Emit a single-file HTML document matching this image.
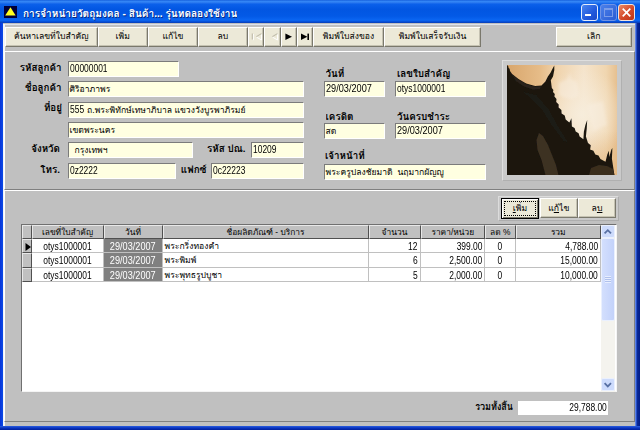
<!DOCTYPE html>
<html lang="th">
<head>
<meta charset="utf-8">
<title>การจำหน่ายวัตถุมงคล</title>
<style>
html,body{margin:0;padding:0;}
body{width:640px;height:430px;position:relative;overflow:hidden;background:#c0c0c0;
 font-family:"Liberation Sans","Tahoma","Loma","Noto Sans Thai UI","Noto Sans Thai",sans-serif;font-size:9.8px;color:#000;}
.a{position:absolute;box-sizing:border-box;white-space:nowrap;overflow:hidden;}
.v{overflow:visible;}
#title{left:0;top:0;width:640px;height:23px;
 background:linear-gradient(to bottom,#1660dc 0%,#3486f6 6%,#2b7af0 11%,#0b60ea 18%,#0256e2 40%,#0359e6 70%,#0b66f2 88%,#0650d8 94%,#0a3cb4 100%);}
#ttext{left:23px;top:3.5px;height:20px;line-height:19px;color:#fff;font-weight:bold;font-size:10.1px;text-shadow:1px 1px 0 #0a2a80;}
.btn{background:#ece9d8;border:1px solid;border-color:#fff #7a786c #7a786c #fff;box-shadow:inset -1px -1px 0 #c5c2b2;text-align:center;font-size:8.6px;line-height:17px;height:20px;top:26.5px;}
.lbl{font-weight:bold;font-size:9.8px;height:16px;line-height:16px;margin-top:-1px;}
.r{text-align:right;}
.c{text-align:center;}
.fld{background:#ffffe1;border:1px solid;border-color:#7b7b7b #fff #fff #7b7b7b;height:16px;line-height:14px;padding-left:1px;font-size:8.6px;}
.n{display:inline-block;font-size:10.3px;transform:scaleX(.82);transform-origin:0 50%;position:relative;top:0px;}
.d{transform:scaleX(.89);}
.r .n{transform-origin:100% 50%;}
.c .n,.gd .n{transform-origin:50% 50%;}
.panel{border:1px solid;border-color:#fff #808080 #808080 #fff;}
.gh{background:#c0c0c0;border:1px solid;border-color:#e8e8e8 #505050 #505050 #e8e8e8;line-height:12px;font-size:8.4px;text-align:center;}
.gc{line-height:14px;border-right:1px solid #c0c0c0;border-bottom:1px solid #c0c0c0;font-size:8.6px;padding:0 2px;background:#fff;}
.gd{background:#808080;color:#fff;text-align:center;}
</style>
</head>
<body>
<div class="a" id="title"></div>
<svg class="a" style="left:4px;top:6px" width="13" height="12" viewBox="0 0 13 12"><rect width="13" height="12" fill="#00003a"/><polygon points="6.5,1.2 11.6,9.6 1.2,9.6" fill="#ffff20"/></svg>
<div class="a" id="ttext"><span id="T1">การจำหน่ายวัตถุมงคล - สินค้า... รุ่นทดลองใช้งาน</span></div>
<div class="a" style="left:0;top:23px;width:2.5px;height:407px;background:linear-gradient(to right,#0833d8,#0a4be6);"></div>
<div class="a" style="left:3px;top:23.5px;width:632px;height:1px;background:#dde2ec;"></div>
<div class="a" style="left:2.5px;top:24px;width:2px;height:402px;background:#f2f4f8;"></div>
<div class="a" style="left:635px;top:23px;width:5px;height:407px;background:linear-gradient(to right,#7a9cf0 0,#2a55d0 28%,#0a2a96 40%,#001b8a 100%);"></div>
<div class="a" style="left:0;top:425.5px;width:640px;height:4.5px;background:linear-gradient(to bottom,#2a5ee0,#0a34c0 50%,#001f9a);"></div>
<div class="a" style="left:581px;top:4px;width:17px;height:17px;border:1px solid #e4ecfc;border-radius:3px;background:linear-gradient(135deg,#4a86f0,#2058dc 60%,#1a48c8);"></div>
<div class="a" style="left:585px;top:14.2px;width:6px;height:2.3px;background:#fff;"></div>
<div class="a" style="left:600px;top:4px;width:17px;height:17px;border:1px solid #6f93e6;border-radius:3px;background:linear-gradient(135deg,#4a80ea,#2a5cd4);"></div>
<div class="a" style="left:604px;top:8px;width:9px;height:9px;border:1px solid #7a9ce8;border-top:2px solid #7a9ce8;"></div>
<div class="a" style="left:618px;top:4px;width:17px;height:17px;border:1px solid #f4e4dc;border-radius:3px;background:linear-gradient(135deg,#ea8a66,#d4492a 55%,#bc3418);"></div>
<svg class="a" style="left:618px;top:4px" width="17" height="17" viewBox="0 0 17 17"><path d="M4.7 4.7 L12.3 12.3 M12.3 4.7 L4.7 12.3" stroke="#fff" stroke-width="1.7"/></svg>
<div class="a btn" style="left:5px;width:92.5px;"><span id="T2">ค้นหาเลขที่ใบสำคัญ</span></div>
<div class="a btn" style="left:97.5px;width:50.5px;"><span id="T3">เพิ่ม</span></div>
<div class="a btn" style="left:148px;width:50px;"><span id="T4">แก้ไข</span></div>
<div class="a btn" style="left:198px;width:49.5px;"><span id="T5">ลบ</span></div>
<div class="a btn" style="left:247.5px;width:16.5px;"><span></span></div>
<div class="a btn" style="left:264px;width:16.5px;"><span></span></div>
<div class="a btn" style="left:280.5px;width:16.5px;"><span></span></div>
<div class="a btn" style="left:297px;width:16px;"><span></span></div>
<div class="a btn" style="left:313px;width:71px;"><span id="T6">พิมพ์ใบส่งของ</span></div>
<div class="a btn" style="left:384px;width:97px;"><span id="T7">พิมพ์ใบเสร็จรับเงิน</span></div>
<div class="a btn" style="left:555.5px;width:76.5px;"><span id="T8">เลิก</span></div>
<svg class="a" style="left:247px;top:26px" width="66" height="21" viewBox="0 0 66 21"><g stroke="#fff" stroke-width="1" fill="none"><path d="M6.3 8 V14.2"/><path d="M9.6 11.2 L14.6 14 V8.2"/><path d="M25.6 11.2 L30.6 14 V8.2"/></g><g stroke="#bdb9a8" stroke-width="1.1" fill="none"><path d="M5.3 7.4 V13.4"/><path d="M9.4 10.6 L14.4 7.6"/><path d="M25.4 10.6 L30.4 7.6"/></g><g fill="#000"><polygon points="38.4,7.6 38.4,14 45,10.8"/><polygon points="54,7.6 54,14 60.4,10.8"/><rect x="60.4" y="7.6" width="1.6" height="6.4"/></g></svg>
<div class="a panel" style="left:4px;top:51px;width:631px;height:139px;"></div>
<div class="a lbl r" style="left:1.5px;top:60.5px;width:60px;"><span id="L1">รหัสลูกค้า</span></div>
<div class="a fld" style="left:67.5px;top:61px;width:111.0px;height:16px;"><span class="n" id="F1">00000001</span></div>
<div class="a lbl r" style="left:1.5px;top:80.8px;width:60px;"><span id="L2">ชื่อลูกค้า</span></div>
<div class="a fld" style="left:67.5px;top:81.3px;width:236.5px;height:16.0px;"><span id="F2">ศิริอาภาพร</span></div>
<div class="a lbl r" style="left:2px;top:101.1px;width:60px;"><span id="L3">ที่อยู่</span></div>
<div class="a fld" style="left:67.5px;top:101.6px;width:236.5px;height:16.0px;"><span id="F3"><span class="n" style="margin-right:-2px">555</span> ถ.พระพิทักษ์เทษาภิบาล แขวงวังบูรพาภิรมย์</span></div>
<div class="a fld" style="left:67.5px;top:122px;width:236.5px;height:16px;"><span id="F4">เขตพระนคร</span></div>
<div class="a lbl r" style="left:0px;top:141.7px;width:60px;"><span id="L4">จังหวัด</span></div>
<div class="a fld" style="left:67.5px;top:142.2px;width:125.5px;height:16.0px;padding-left:6px;"><span id="F5">กรุงเทพฯ</span></div>
<div class="a lbl r" style="left:195.5px;top:141.7px;width:50px;"><span id="L5">รหัส ปณ.</span></div>
<div class="a fld" style="left:251px;top:142.2px;width:53px;height:16.0px;"><span class="n" id="F6">10209</span></div>
<div class="a lbl r" style="left:0px;top:162.5px;width:60px;"><span id="L6">โทร.</span></div>
<div class="a fld" style="left:67.5px;top:163px;width:108.5px;height:16px;"><span class="n" id="F7">0z2222</span></div>
<div class="a lbl r" style="left:176.5px;top:162.5px;width:30px;"><span id="L7">แฟกซ์</span></div>
<div class="a fld" style="left:211px;top:163px;width:93px;height:16px;"><span class="n" id="F8">0c22223</span></div>
<div class="a lbl" style="left:325.5px;top:66.8px;width:90px;"><span id="L8">วันที่</span></div>
<div class="a fld" style="left:323.5px;top:81px;width:61.0px;height:16px;"><span class="n d" id="F9">29/03/2007</span></div>
<div class="a lbl" style="left:397px;top:66.8px;width:90px;"><span id="L9">เลขใบสำคัญ</span></div>
<div class="a fld" style="left:395px;top:81px;width:91px;height:16px;"><span class="n" id="F10">otys1000001</span></div>
<div class="a lbl" style="left:325.5px;top:110px;width:90px;"><span id="L10">เครดิต</span></div>
<div class="a fld" style="left:323.5px;top:123px;width:61.0px;height:16px;"><span id="F11">สด</span></div>
<div class="a lbl" style="left:397px;top:110px;width:90px;"><span id="L11">วันครบชำระ</span></div>
<div class="a fld" style="left:395px;top:123px;width:91px;height:16px;"><span class="n d" id="F12">29/03/2007</span></div>
<div class="a lbl" style="left:325px;top:149px;width:90px;"><span id="L12">เจ้าหน้าที่</span></div>
<div class="a fld" style="left:323.5px;top:163.5px;width:162.5px;height:16.0px;"><span id="F13">พระครูปลงชัยมาดิ&nbsp; นฤมากผัญญู</span></div>
<div class="a" style="left:501.5px;top:59.5px;width:120px;height:121px;border:1px solid;border-color:#dedede #b0b0b0 #b0b0b0 #dedede;background:#cacaca;"></div>
<svg class="a" style="left:507px;top:65px" width="110" height="110" viewBox="0 0 110 110"><defs><linearGradient id="sky" x1="0" y1="0" x2="1" y2="0"><stop offset="0" stop-color="#d8a66c"/><stop offset="0.3" stop-color="#e6bc88"/><stop offset="0.46" stop-color="#f0d4ae"/><stop offset="0.7" stop-color="#f5e4cc"/><stop offset="0.9" stop-color="#f0d6b0"/><stop offset="1" stop-color="#e6c090"/></linearGradient><radialGradient id="hz" cx="0.68" cy="0.45" r="0.42"><stop offset="0" stop-color="#f7eddc" stop-opacity="0.95"/><stop offset="1" stop-color="#f7eddc" stop-opacity="0"/></radialGradient><linearGradient id="bt" x1="0" y1="0" x2="0" y2="1"><stop offset="0.6" stop-color="#e2b47c" stop-opacity="0"/><stop offset="1" stop-color="#e2b47c" stop-opacity="0.7"/></linearGradient><filter id="bl" x="-5%" y="-5%" width="110%" height="110%"><feGaussianBlur stdDeviation="0.55"/></filter><filter id="bl2" x="-20%" y="-20%" width="140%" height="140%"><feGaussianBlur stdDeviation="1.6"/></filter></defs><rect width="110" height="110" fill="url(#sky)"/><rect width="110" height="110" fill="url(#hz)"/><rect width="110" height="110" fill="url(#bt)"/><g filter="url(#bl2)" fill="#f8eee0" opacity="0.5"><polygon points="52,18 60,14 63,8 64,14 70,17 72,30 66,34 58,33 52,30"/><rect x="62" y="13" width="1.6" height="14"/><polygon points="80,40 96,36 100,60 86,66"/></g><g filter="url(#bl)"><polygon points="0.0,0 1.3,1.3 1.6,3 2.6,3.8 3.0,6 5.1,9 11.5,14.1 19.2,18.4 28.1,21 34.5,20.5 38.4,16.6 40.9,11.5 43.5,7.7 45.5,3.8 47.3,0.5 47.3,5.1 46.0,11.5 43.8,15.3 44.8,23 46.4,25 46.0,27 47.8,29 47.4,31.5 49.5,34 49.2,37 51.7,39.5 51.6,42.5 54.4,45 54.6,48.5 57.7,50.5 58.7,54.5 62.3,57.6 63.4,55.5 64.4,53.2 64.7,58 64.9,61.4 67.6,63 68.7,66.5 71.6,68.2 72.6,71.6 76.4,74.2 76.9,66.5 78.4,60.1 80.2,55 79.7,64 78.9,71.6 81.0,78 83.8,80.2 83.1,84.4 86.4,85.8 88.3,89.5 91.5,90.4 93.4,94.1 98.5,96.7 100.3,89.5 101.8,85.7 102.3,92.1 104.4,84.4 105.4,83.1 104.9,93.4 106.2,102.3 107.4,110 0.0,110" fill="#1a1610"/><polygon points="32,68 36,71 41,80 45,90 49,100 51.5,110 38.5,110 34.5,95 30.5,85 29.5,75" fill="#3e3121"/><polygon points="84,103 92,100 100,101 106,104 107.4,110 82,110" fill="#3a2e1e"/><polygon points="5,9.6 11.5,14.8 19.2,19.2 28.1,21.8 34,21.6 33,24 26,24.4 17,21.6 9,16" fill="#2c241a"/><polygon points="14,26 30,30 42,44 52,62 62,78 56,76 44,60 34,44 24,34" fill="#1f1a12"/></g></svg>
<div class="a panel" style="left:4px;top:190px;width:631px;height:232px;"></div>
<div class="a" style="left:497.5px;top:195.5px;width:121px;height:25px;border:1px solid;border-color:#dcdcdc #adadad #adadad #dcdcdc;background:#c9c9c9;"></div>
<div class="a btn" style="left:501px;top:197.5px;width:38px;height:21px;border:1px solid #000;box-shadow:inset 1px 1px 0 #fff,inset -1px -1px 0 #7a786c;line-height:18.6px;font-size:8.7px;"><span id="B1"><u>เ</u>พิ่ม</span></div>
<div class="a" style="left:504px;top:200.5px;width:32px;height:15px;border:1px dotted #000;"></div>
<div class="a btn" style="left:540px;top:198px;width:37.5px;height:20px;line-height:18.6px;font-size:8.7px;"><span id="B2">แ<u>ก้</u>ไข</span></div>
<div class="a btn" style="left:578px;top:198px;width:38px;height:20px;line-height:18.6px;font-size:8.7px;"><span id="B3">ล<u>บ</u></span></div>
<div class="a" style="left:21px;top:223.5px;width:595.5px;height:168.5px;background:#fff;border:1px solid;border-color:#707070 #f4f4f4 #f4f4f4 #707070;"></div>
<div class="a gh" style="left:22px;top:224.5px;width:9.5px;height:14px;"><span id="H0"></span></div>
<div class="a gh" style="left:31.5px;top:224.5px;width:72.0px;height:14px;"><span id="H1">เลขที่ใบสำคัญ</span></div>
<div class="a gh" style="left:103.5px;top:224.5px;width:59.0px;height:14px;"><span id="H2">วันที่</span></div>
<div class="a gh" style="left:162.5px;top:224.5px;width:206.0px;height:14px;"><span id="H3">ชื่อผลิตภัณฑ์ - บริการ</span></div>
<div class="a gh" style="left:368.5px;top:224.5px;width:52.0px;height:14px;"><span id="H4">จำนวน</span></div>
<div class="a gh" style="left:420.5px;top:224.5px;width:64.5px;height:14px;"><span id="H5">ราคา/หน่วย</span></div>
<div class="a gh" style="left:485px;top:224.5px;width:30.5px;height:14px;"><span id="H6">ลด %</span></div>
<div class="a gh" style="left:515.5px;top:224.5px;width:85.5px;height:14px;"><span id="H7">รวม</span></div>
<div class="a gh" style="left:22px;top:238.5px;width:9.5px;height:14.5px;"></div>
<div class="a gc c" style="left:31.5px;top:238.5px;width:72.0px;height:14.5px;line-height:15.1px;"><span class="n" id="G00">otys1000001</span></div>
<div class="a gc gd" style="left:103.5px;top:238.5px;width:59.0px;height:14.5px;line-height:15.1px;"><span class="n d" id="G01">29/03/2007</span></div>
<div class="a gc" style="left:162.5px;top:238.5px;width:206.0px;height:14.5px;line-height:15.1px;"><span id="G02">พระกริ่งทองคำ</span></div>
<div class="a gc r" style="left:368.5px;top:238.5px;width:52.0px;height:14.5px;line-height:15.1px;"><span class="n" id="G03">12</span></div>
<div class="a gc r" style="left:420.5px;top:238.5px;width:64.5px;height:14.5px;line-height:15.1px;"><span class="n" id="G04">399.00</span></div>
<div class="a gc c" style="left:485px;top:238.5px;width:30.5px;height:14.5px;line-height:15.1px;"><span class="n" id="G05">0</span></div>
<div class="a gc r" style="left:515.5px;top:238.5px;width:85.5px;height:14.5px;line-height:15.1px;"><span class="n" id="G06">4,788.00</span></div>
<div class="a gh" style="left:22px;top:253px;width:9.5px;height:14.600000000000023px;"></div>
<div class="a gc c" style="left:31.5px;top:253px;width:72.0px;height:14.600000000000023px;line-height:15.200000000000022px;"><span class="n" id="G10">otys1000001</span></div>
<div class="a gc gd" style="left:103.5px;top:253px;width:59.0px;height:14.600000000000023px;line-height:15.200000000000022px;"><span class="n d" id="G11">29/03/2007</span></div>
<div class="a gc" style="left:162.5px;top:253px;width:206.0px;height:14.600000000000023px;line-height:15.200000000000022px;"><span id="G12">พระพิมพ์</span></div>
<div class="a gc r" style="left:368.5px;top:253px;width:52.0px;height:14.600000000000023px;line-height:15.200000000000022px;"><span class="n" id="G13">6</span></div>
<div class="a gc r" style="left:420.5px;top:253px;width:64.5px;height:14.600000000000023px;line-height:15.200000000000022px;"><span class="n" id="G14">2,500.00</span></div>
<div class="a gc c" style="left:485px;top:253px;width:30.5px;height:14.600000000000023px;line-height:15.200000000000022px;"><span class="n" id="G15">0</span></div>
<div class="a gc r" style="left:515.5px;top:253px;width:85.5px;height:14.600000000000023px;line-height:15.200000000000022px;"><span class="n" id="G16">15,000.00</span></div>
<div class="a gh" style="left:22px;top:267.6px;width:9.5px;height:14.699999999999989px;"></div>
<div class="a gc c" style="left:31.5px;top:267.6px;width:72.0px;height:14.699999999999989px;line-height:15.299999999999988px;"><span class="n" id="G20">otys1000001</span></div>
<div class="a gc gd" style="left:103.5px;top:267.6px;width:59.0px;height:14.699999999999989px;line-height:15.299999999999988px;"><span class="n d" id="G21">29/03/2007</span></div>
<div class="a gc" style="left:162.5px;top:267.6px;width:206.0px;height:14.699999999999989px;line-height:15.299999999999988px;"><span id="G22">พระพุทธรูปบูชา</span></div>
<div class="a gc r" style="left:368.5px;top:267.6px;width:52.0px;height:14.699999999999989px;line-height:15.299999999999988px;"><span class="n" id="G23">5</span></div>
<div class="a gc r" style="left:420.5px;top:267.6px;width:64.5px;height:14.699999999999989px;line-height:15.299999999999988px;"><span class="n" id="G24">2,000.00</span></div>
<div class="a gc c" style="left:485px;top:267.6px;width:30.5px;height:14.699999999999989px;line-height:15.299999999999988px;"><span class="n" id="G25">0</span></div>
<div class="a gc r" style="left:515.5px;top:267.6px;width:85.5px;height:14.699999999999989px;line-height:15.299999999999988px;"><span class="n" id="G26">10,000.00</span></div>
<svg class="a" style="left:24.5px;top:242.5px" width="7" height="9"><polygon points="0.5,0 6,4 0.5,8" fill="#000"/></svg>
<div class="a" style="left:601px;top:224.5px;width:13.5px;height:167px;background:#f4f3ee;"></div>
<div class="a" style="left:601px;top:224.5px;width:13.5px;height:13.5px;background:#cddbfc;border:1px solid #eaf0fe;border-radius:2px;"></div>
<svg class="a" style="left:601px;top:224.5px" width="14" height="14"><path d="M3.6 8.4 L6.8 5.2 L10 8.4" stroke="#5870a4" stroke-width="1.8" fill="none"/></svg>
<div class="a" style="left:601px;top:238px;width:13.5px;height:83px;background:linear-gradient(to right,#d3dffd,#c3d2fb);border:1px solid #eaf0fe;border-radius:2px;"></div>
<div class="a" style="left:605px;top:276px;width:6px;height:7px;background:repeating-linear-gradient(to bottom,#eef3ff 0,#eef3ff 1px,#a9bbe8 1px,#a9bbe8 2px);opacity:.8;"></div>
<div class="a" style="left:601px;top:377.5px;width:13.5px;height:13.5px;background:#cddbfc;border:1px solid #eaf0fe;border-radius:2px;"></div>
<svg class="a" style="left:601px;top:377.5px" width="14" height="14"><path d="M3.6 5.2 L6.8 8.4 L10 5.2" stroke="#5870a4" stroke-width="1.8" fill="none"/></svg>
<div class="a lbl r" style="left:452px;top:400px;width:61px;font-size:9px;"><span id="TL">รวมทั้งสิ้น</span></div>
<div class="a r" style="left:517.5px;top:400.5px;width:90px;height:14px;background:#fff;line-height:14.6px;padding-right:1px;"><span class="n" id="TV">29,788.00</span></div>
</body>
</html>
